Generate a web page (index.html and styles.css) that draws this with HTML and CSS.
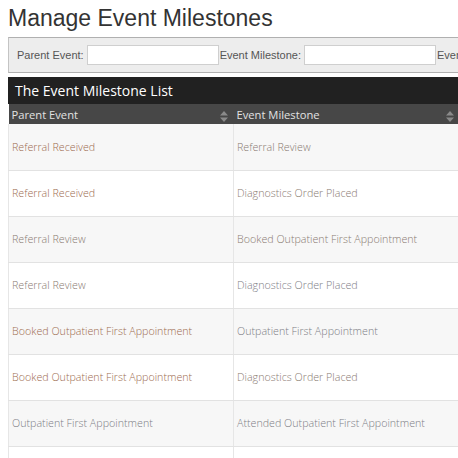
FILE: index.html
```html
<!DOCTYPE html>
<html lang="en">
<head>
<meta charset="utf-8">
<title>Manage Event Milestones</title>
<link rel="stylesheet" href="styles.css">
</head>
<body>
<div class="page">
  <h1 class="title">Manage Event Milestones</h1>
  <div class="filters">
    <label class="filter">Parent Event: <input type="text" class="filter-input"></label>
    <label class="filter">Event Milestone: <input type="text" class="filter-input"></label>
    <label class="filter">Event Type: <input type="text" class="filter-input"></label>
  </div>
  <div class="panel">
    <div class="panel-title">The Event Milestone List</div>
    <table class="grid">
      <colgroup>
        <col class="col1">
        <col class="col2">
        <col class="col3">
      </colgroup>
      <thead>
        <tr>
          <th><span>Parent Event</span><svg class="sort" width="8" height="11" viewBox="0 0 8 11"><path d="M4 0 L8 4.5 L0 4.5 Z M0 6.5 L8 6.5 L4 11 Z" fill="#8a8a8a"/></svg></th>
          <th><span>Event Milestone</span><svg class="sort" width="8" height="11" viewBox="0 0 8 11"><path d="M4 0 L8 4.5 L0 4.5 Z M0 6.5 L8 6.5 L4 11 Z" fill="#8a8a8a"/></svg></th>
          <th><span>Event Type</span></th>
        </tr>
      </thead>
      <tbody>
        <tr class="odd"><td class="warm">Referral Received</td><td class="mid">Referral Review</td><td></td></tr>
        <tr><td class="warm">Referral Received</td><td class="mid">Diagnostics Order Placed</td><td></td></tr>
        <tr class="odd"><td class="mid">Referral Review</td><td class="mid">Booked Outpatient First Appointment</td><td></td></tr>
        <tr><td class="mid">Referral Review</td><td class="cool">Diagnostics Order Placed</td><td></td></tr>
        <tr class="odd"><td class="warm">Booked Outpatient First Appointment</td><td class="cool">Outpatient First Appointment</td><td></td></tr>
        <tr><td class="warm">Booked Outpatient First Appointment</td><td class="mid">Diagnostics Order Placed</td><td></td></tr>
        <tr class="odd"><td class="cool">Outpatient First Appointment</td><td class="cool">Attended Outpatient First Appointment</td><td></td></tr>
        <tr><td class="cool">&nbsp;</td><td class="cool">&nbsp;</td><td></td></tr>
      </tbody>
    </table>
  </div>
</div>
</body>
</html>
```

FILE: styles.css
```css
html, body {
  margin: 0;
  padding: 0;
  overflow: hidden;
  background: #fff;
}
.page {
  padding: 0 0 0 8px;
  width: 720px;
}
.title {
  margin: 5px 0 0;
  font-family: "Liberation Sans", Arial, sans-serif;
  font-weight: normal;
  font-size: 23px;
  line-height: 26px;
  color: #333;
}
.filters {
  margin-top: 6px;
  display: flex;
  align-items: center;
  gap: 1px;
  height: 34px;
  padding: 0 8px;
  background: #ededed;
  border-top: 1px solid #b0b0b0;
  border-bottom: 1px solid #b0b0b0;
  border-left: 1px solid #c4c4c4;
}
.filter {
  display: flex;
  align-items: center;
  gap: 3px;
  font-family: "Liberation Sans", Arial, sans-serif;
  font-size: 11px;
  color: #555;
  white-space: nowrap;
}
.filter-input {
  box-sizing: border-box;
  width: 132px;
  height: 20px;
  margin: 0;
  border: 1px solid #cfcfcf;
  background: #fff;
  padding: 0 3px;
}
.panel {
  margin-top: 4px;
}
.panel-title {
  height: 27px;
  line-height: 27px;
  padding-left: 7px;
  background: #212121;
  color: #fff;
  font-family: "Open Sans", sans-serif;
  font-size: 14px;
}
.grid {
  border-collapse: collapse;
  table-layout: fixed;
  width: 712px;
  font-family: "Open Sans", sans-serif;
  font-size: 10.7px;
}
.col1 { width: 225px; }
.col2 { width: 226px; }
.grid th {
  box-sizing: border-box;
  height: 20px;
  padding: 0 6px 0 3px;
  background: #474747;
  color: #e2e2e2;
  font-weight: normal;
  font-size: 11.2px;
  text-align: left;
  white-space: nowrap;
  overflow: hidden;
}
.grid th span {
  display: inline-block;
  vertical-align: middle;
}
.grid th .sort {
  float: right;
  margin-top: 5px;
}
.grid td {
  box-sizing: border-box;
  height: 46px;
  padding: 0 3px;
  border-bottom: 1px solid #e2e2e2;
  border-left: 1px solid #e6e6e6;
  background: #fff;
  white-space: nowrap;
  overflow: hidden;
  font-weight: 300;
}
.grid tr.odd td {
  background: #f7f7f7;
}
.warm { color: #9d6c4f; }
.mid { color: #8a7b72; }
.cool { color: #7e7e86; }
```
